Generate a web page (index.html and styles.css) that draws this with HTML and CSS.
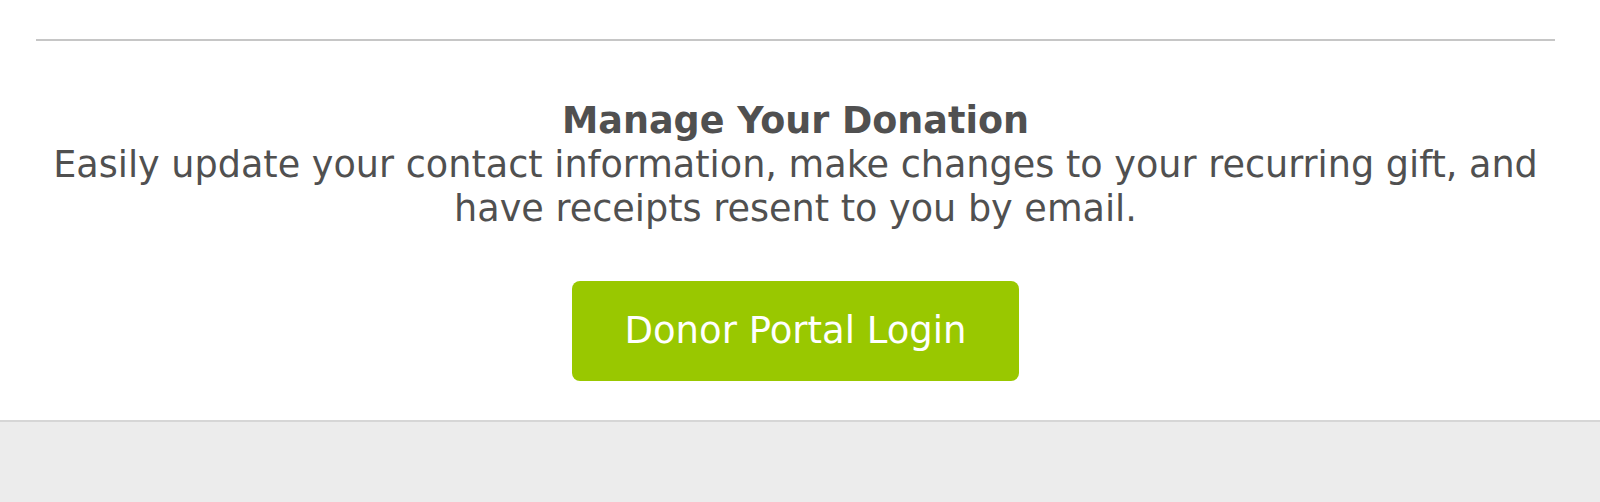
FILE: index.html
```html
<!DOCTYPE html>
<html lang="en">
<head>
  <meta charset="UTF-8" />
  <meta name="viewport" content="width=device-width, initial-scale=1.0" />
  <title>Manage Your Donation</title>
  <link rel="stylesheet" href="styles.css">
</head>
<body>

  <div class="page">
    <hr class="divider">

    <div class="manage">
      <h2>Manage Your Donation</h2>
      <p>Easily update your contact information, make changes to your recurring gift, and have receipts resent to you by email.</p>
      <a class="portal-btn" href="#">Donor Portal Login</a>
    </div>
  </div>

  <footer class="footer"></footer>

</body>
</html>
```

FILE: styles.css
```css
body {
  margin: 0;
  font-family: "DejaVu Sans", Verdana, sans-serif;
  color: #505050;
  background: #ececec;
}

.page {
  background: #fff;
  padding: 39px 45px 39px 36px;
  border-bottom: 2px solid #d6d6d6;
}

.divider {
  margin: 0;
  border: 0;
  height: 2px;
  background: #c6c6c6;
}

.manage {
  text-align: center;
  padding-top: 57px;
}

.manage h2 {
  margin: 0;
  font-size: 36.5px;
  line-height: 45px;
}

.manage p {
  margin: 0 0 50px;
  font-size: 36.6px;
  line-height: 44px;
}

.portal-btn {
  display: inline-block;
  width: 447px;
  height: 100px;
  line-height: 100px;
  border-radius: 8px;
  background: #99c800;
  color: #fff;
  font-size: 37px;
  text-decoration: none;
}

.footer {
  height: 79px;
}
```
